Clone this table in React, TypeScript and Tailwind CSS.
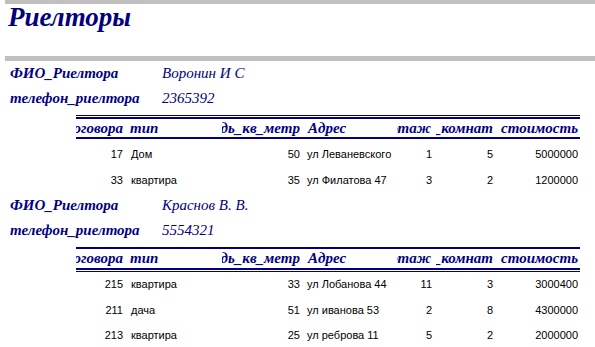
type Deal = {
  id: number;
  type: string;
  area: number;
  address: string;
  floor: number;
  rooms: number;
  price: number;
};

type Realtor = {
  name: string;
  phone: string;
  deals: Deal[];
};

const realtors: Realtor[] = [
  {
    name: "Воронин И С",
    phone: "2365392",
    deals: [
      { id: 17, type: "Дом", area: 50, address: "ул Леваневского", floor: 1, rooms: 5, price: 5000000 },
      { id: 33, type: "квартира", area: 35, address: "ул Филатова 47", floor: 3, rooms: 2, price: 1200000 },
    ],
  },
  {
    name: "Краснов В. В.",
    phone: "5554321",
    deals: [
      { id: 215, type: "квартира", area: 33, address: "ул Лобанова 44", floor: 11, rooms: 3, price: 3000400 },
      { id: 211, type: "дача", area: 51, address: "ул иванова 53", floor: 2, rooms: 8, price: 4300000 },
      { id: 213, type: "квартира", area: 25, address: "ул реброва 11", floor: 5, rooms: 2, price: 2000000 },
    ],
  },
];

const cols = "grid grid-cols-[48px_98px_79px_96px_39px_58px_86px]";
const head = "flex overflow-hidden whitespace-nowrap";

function Field({ label, value }: { label: string; value: string }) {
  return (
    <div className="flex h-[25px] pl-[10px] leading-[25px] text-[15px] text-[#000080] font-['Liberation_Serif',serif] italic">
      <div className="w-[152px] font-bold">{label}</div>
      <div>{value}</div>
    </div>
  );
}

function DealTable({ deals, first }: { deals: Deal[]; first: boolean }) {
  return (
    <div className="ml-[76px] w-[504px] pt-[4px]">
      {first ? (
        <>
          <div className="h-[1px] bg-[#000080]" />
          <div className="mt-[1px] h-[2px] bg-[#000080]" />
        </>
      ) : (
        <div className="h-[2px] bg-[#000080]" />
      )}
      <div
        className={`${cols} ${first ? "h-[18px] leading-[18px]" : "h-[19px] leading-[19px]"} text-[15px] font-bold italic text-[#000080] font-['Liberation_Serif',serif]`}
      >
        <div className={`${head} justify-end pr-[1px]`}>номер_договора</div>
        <div className={`${head} pl-[6px]`}>тип</div>
        <div className={`${head} justify-end pr-[1px]`}>Площадь_кв_метр</div>
        <div className={`${head} pl-[7px]`}>Адрес</div>
        <div className={`${head} justify-end pr-[5px]`}>этаж</div>
        <div className={`${head} justify-end pr-[1px]`}>кол_комнат</div>
        <div className={`${head} justify-end pr-[2px]`}>стоимость</div>
      </div>
      {first ? (
        <div className="h-[2px] bg-[#000080]" />
      ) : (
        <>
          <div className="h-[2px] bg-[#000080]" />
          <div className="mt-[1px] h-[1px] bg-[#000080]" />
        </>
      )}
      <div className={first ? "pt-[3px]" : ""}>
        {deals.map((d) => (
          <div
            key={d.id}
            className={`${cols} h-[25.5px] leading-[25.5px] text-[11px] text-black font-['Liberation_Sans',Arial,sans-serif]`}
          >
            <div className="text-right pr-[1px]">{d.id}</div>
            <div className="pl-[7px]">{d.type}</div>
            <div className="text-right pr-[1px]">{d.area}</div>
            <div className="pl-[6px] whitespace-nowrap">{d.address}</div>
            <div className="text-right pr-[4px]">{d.floor}</div>
            <div className="text-right pr-[1px]">{d.rooms}</div>
            <div className="text-right pr-[2px]">{d.price}</div>
          </div>
        ))}
      </div>
    </div>
  );
}

export default function App() {
  return (
    <div className="w-[595px] h-[347px] bg-white overflow-hidden">
      <div className="ml-[5px] h-[4px] bg-[#c0c0c0]" />
      <div className="h-[52px] pl-[8px] leading-[27px] text-[27px] font-bold italic text-[#000080] font-['Liberation_Serif',serif]">
        Риелторы
      </div>
      <div className="ml-[5px] h-[5px] bg-[#c0c0c0]" />
      {realtors.map((r, i) => (
        <div key={r.phone}>
          <Field label="ФИО_Риелтора" value={r.name} />
          <Field label="телефон_риелтора" value={r.phone} />
          <DealTable deals={r.deals} first={i === 0} />
        </div>
      ))}
    </div>
  );
}
